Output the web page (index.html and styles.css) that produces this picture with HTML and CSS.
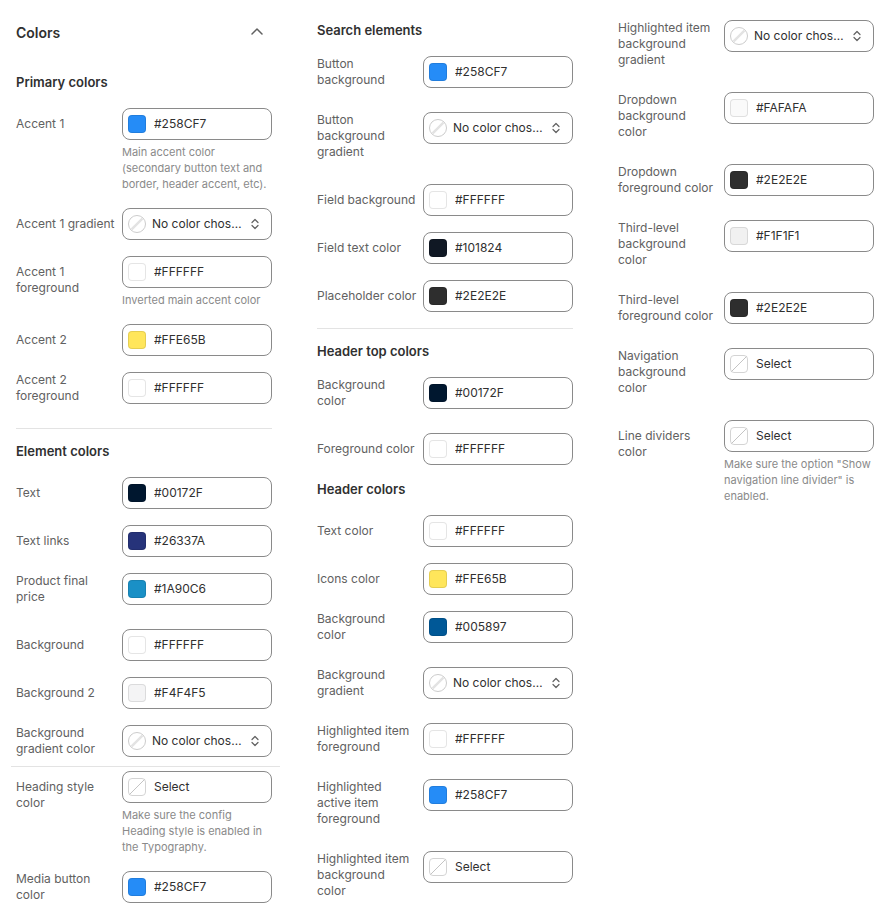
FILE: index.html
```html
<!DOCTYPE html>
<html lang="en">
<head>
  <meta charset="UTF-8">
  <title>Theme settings – Colors</title>
  <meta name="viewport" content="width=device-width, initial-scale=1.0">
  <link rel="stylesheet" href="styles.css">
</head>
<body>
  <div class="panel">

    <!-- first column: primary + element colors -->
    <div class="column col-1">
      <div class="panel-head">
        <span>Colors</span>
        <svg class="chevron" width="20" height="20" viewBox="0 0 20 20"><path d="M5 12 10 7l5 5"/></svg>
      </div>

      <div class="section">
        <h3 class="section-title">Primary colors</h3>
        <div class="settings">
          <div class="setting">
            <span class="label">Accent 1</span>
            <div class="control">
              <div class="picker"><span class="swatch" style="background:#258CF7"></span><span class="value">#258CF7</span></div>
              <p class="help">Main accent color (secondary button text and border, header accent, etc).</p>
            </div>
          </div>
          <div class="setting">
            <span class="label">Accent 1 gradient</span>
            <div class="control">
              <div class="picker empty">
                <svg class="none" width="18" height="18" viewBox="0 0 18 18"><circle cx="9" cy="9" r="8.5"/><path d="M3.6 14.4 14.4 3.6"/></svg>
                <span class="value">No color chosen</span>
                <svg class="updown" width="8" height="12" viewBox="0 0 8 12"><path d="M1 4.5 4 1.5l3 3M1 7.5l3 3 3-3"/></svg>
              </div>
            </div>
          </div>
          <div class="setting">
            <span class="label">Accent 1 foreground</span>
            <div class="control">
              <div class="picker"><span class="swatch" style="background:#FFFFFF"></span><span class="value">#FFFFFF</span></div>
              <p class="help">Inverted main accent color</p>
            </div>
          </div>
          <div class="setting">
            <span class="label">Accent 2</span>
            <div class="control">
              <div class="picker"><span class="swatch" style="background:#FFE65B"></span><span class="value">#FFE65B</span></div>
            </div>
          </div>
          <div class="setting tall">
            <span class="label">Accent 2 foreground</span>
            <div class="control">
              <div class="picker"><span class="swatch" style="background:#FFFFFF"></span><span class="value">#FFFFFF</span></div>
            </div>
          </div>
        </div>
      </div>

      <div class="divider"></div>

      <div class="section">
        <h3 class="section-title">Element colors</h3>
        <div class="settings">
          <div class="setting">
            <span class="label">Text</span>
            <div class="control">
              <div class="picker"><span class="swatch" style="background:#00172F"></span><span class="value">#00172F</span></div>
            </div>
          </div>
          <div class="setting">
            <span class="label">Text links</span>
            <div class="control">
              <div class="picker"><span class="swatch" style="background:#26337A"></span><span class="value">#26337A</span></div>
            </div>
          </div>
          <div class="setting tall">
            <span class="label">Product final price</span>
            <div class="control">
              <div class="picker"><span class="swatch" style="background:#1A90C6"></span><span class="value">#1A90C6</span></div>
            </div>
          </div>
          <div class="setting">
            <span class="label">Background</span>
            <div class="control">
              <div class="picker"><span class="swatch" style="background:#FFFFFF"></span><span class="value">#FFFFFF</span></div>
            </div>
          </div>
          <div class="setting">
            <span class="label">Background 2</span>
            <div class="control">
              <div class="picker"><span class="swatch" style="background:#F4F4F5"></span><span class="value">#F4F4F5</span></div>
            </div>
          </div>
          <div class="setting tall">
            <span class="label">Background gradient color</span>
            <div class="control">
              <div class="picker empty">
                <svg class="none" width="18" height="18" viewBox="0 0 18 18"><circle cx="9" cy="9" r="8.5"/><path d="M3.6 14.4 14.4 3.6"/></svg>
                <span class="value">No color chosen</span>
                <svg class="updown" width="8" height="12" viewBox="0 0 8 12"><path d="M1 4.5 4 1.5l3 3M1 7.5l3 3 3-3"/></svg>
              </div>
            </div>
          </div>
          <div class="row-line"></div>
          <div class="setting">
            <span class="label">Heading style color</span>
            <div class="control">
              <div class="picker">
                <svg class="unset" width="18" height="18" viewBox="0 0 18 18"><rect x=".5" y=".5" width="17" height="17" rx="3.5"/><path d="M1.5 16.5 16.5 1.5"/></svg>
                <span class="value">Select</span>
              </div>
              <p class="help">Make sure the config Heading style is enabled in the Typography.</p>
            </div>
          </div>
          <div class="setting tall">
            <span class="label">Media button color</span>
            <div class="control">
              <div class="picker"><span class="swatch" style="background:#258CF7"></span><span class="value">#258CF7</span></div>
            </div>
          </div>
        </div>
      </div>
    </div>

    <!-- second column: search + header -->
    <div class="column col-2">
      <div class="section">
        <h3 class="section-title">Search elements</h3>
        <div class="settings">
          <div class="setting tall">
            <span class="label">Button background</span>
            <div class="control">
              <div class="picker"><span class="swatch" style="background:#258CF7"></span><span class="value">#258CF7</span></div>
            </div>
          </div>
          <div class="setting tall">
            <span class="label">Button background gradient</span>
            <div class="control">
              <div class="picker empty">
                <svg class="none" width="18" height="18" viewBox="0 0 18 18"><circle cx="9" cy="9" r="8.5"/><path d="M3.6 14.4 14.4 3.6"/></svg>
                <span class="value">No color chosen</span>
                <svg class="updown" width="8" height="12" viewBox="0 0 8 12"><path d="M1 4.5 4 1.5l3 3M1 7.5l3 3 3-3"/></svg>
              </div>
            </div>
          </div>
          <div class="setting">
            <span class="label">Field background</span>
            <div class="control">
              <div class="picker"><span class="swatch" style="background:#FFFFFF"></span><span class="value">#FFFFFF</span></div>
            </div>
          </div>
          <div class="setting">
            <span class="label">Field text color</span>
            <div class="control">
              <div class="picker"><span class="swatch" style="background:#101824"></span><span class="value">#101824</span></div>
            </div>
          </div>
          <div class="setting">
            <span class="label">Placeholder color</span>
            <div class="control">
              <div class="picker"><span class="swatch" style="background:#2E2E2E"></span><span class="value">#2E2E2E</span></div>
            </div>
          </div>
        </div>
      </div>

      <div class="divider"></div>

      <div class="section">
        <h3 class="section-title">Header top colors</h3>
        <div class="settings">
          <div class="setting tall">
            <span class="label">Background color</span>
            <div class="control">
              <div class="picker"><span class="swatch" style="background:#00172F"></span><span class="value">#00172F</span></div>
            </div>
          </div>
          <div class="setting">
            <span class="label">Foreground color</span>
            <div class="control">
              <div class="picker"><span class="swatch" style="background:#FFFFFF"></span><span class="value">#FFFFFF</span></div>
            </div>
          </div>
        </div>
      </div>

      <div class="section">
        <h3 class="section-title">Header colors</h3>
        <div class="settings">
          <div class="setting">
            <span class="label">Text color</span>
            <div class="control">
              <div class="picker"><span class="swatch" style="background:#FFFFFF"></span><span class="value">#FFFFFF</span></div>
            </div>
          </div>
          <div class="setting">
            <span class="label">Icons color</span>
            <div class="control">
              <div class="picker"><span class="swatch" style="background:#FFE65B"></span><span class="value">#FFE65B</span></div>
            </div>
          </div>
          <div class="setting tall">
            <span class="label">Background color</span>
            <div class="control">
              <div class="picker"><span class="swatch" style="background:#005897"></span><span class="value">#005897</span></div>
            </div>
          </div>
          <div class="setting tall">
            <span class="label">Background gradient</span>
            <div class="control">
              <div class="picker empty">
                <svg class="none" width="18" height="18" viewBox="0 0 18 18"><circle cx="9" cy="9" r="8.5"/><path d="M3.6 14.4 14.4 3.6"/></svg>
                <span class="value">No color chosen</span>
                <svg class="updown" width="8" height="12" viewBox="0 0 8 12"><path d="M1 4.5 4 1.5l3 3M1 7.5l3 3 3-3"/></svg>
              </div>
            </div>
          </div>
          <div class="setting tall">
            <span class="label">Highlighted item foreground</span>
            <div class="control">
              <div class="picker"><span class="swatch" style="background:#FFFFFF"></span><span class="value">#FFFFFF</span></div>
            </div>
          </div>
          <div class="setting tall">
            <span class="label">Highlighted active item foreground</span>
            <div class="control">
              <div class="picker"><span class="swatch" style="background:#258CF7"></span><span class="value">#258CF7</span></div>
            </div>
          </div>
          <div class="setting tall">
            <span class="label">Highlighted item background<br>color</span>
            <div class="control">
              <div class="picker">
                <svg class="unset" width="18" height="18" viewBox="0 0 18 18"><rect x=".5" y=".5" width="17" height="17" rx="3.5"/><path d="M1.5 16.5 16.5 1.5"/></svg>
                <span class="value">Select</span>
              </div>
            </div>
          </div>
        </div>
      </div>
    </div>

    <!-- third column: rest of header colors -->
    <div class="column col-3">
      <div class="settings">
        <div class="setting tall">
          <span class="label">Highlighted item background gradient</span>
          <div class="control">
            <div class="picker empty">
              <svg class="none" width="18" height="18" viewBox="0 0 18 18"><circle cx="9" cy="9" r="8.5"/><path d="M3.6 14.4 14.4 3.6"/></svg>
              <span class="value">No color chosen</span>
              <svg class="updown" width="8" height="12" viewBox="0 0 8 12"><path d="M1 4.5 4 1.5l3 3M1 7.5l3 3 3-3"/></svg>
            </div>
          </div>
        </div>
        <div class="setting tall">
          <span class="label">Dropdown background<br>color</span>
          <div class="control">
            <div class="picker"><span class="swatch" style="background:#FAFAFA"></span><span class="value">#FAFAFA</span></div>
          </div>
        </div>
        <div class="setting tall">
          <span class="label">Dropdown foreground color</span>
          <div class="control">
            <div class="picker"><span class="swatch" style="background:#2E2E2E"></span><span class="value">#2E2E2E</span></div>
          </div>
        </div>
        <div class="setting tall">
          <span class="label">Third-level background<br>color</span>
          <div class="control">
            <div class="picker"><span class="swatch" style="background:#F1F1F1"></span><span class="value">#F1F1F1</span></div>
          </div>
        </div>
        <div class="setting tall">
          <span class="label">Third-level foreground color</span>
          <div class="control">
            <div class="picker"><span class="swatch" style="background:#2E2E2E"></span><span class="value">#2E2E2E</span></div>
          </div>
        </div>
        <div class="setting tall">
          <span class="label">Navigation background<br>color</span>
          <div class="control">
            <div class="picker">
              <svg class="unset" width="18" height="18" viewBox="0 0 18 18"><rect x=".5" y=".5" width="17" height="17" rx="3.5"/><path d="M1.5 16.5 16.5 1.5"/></svg>
              <span class="value">Select</span>
            </div>
          </div>
        </div>
        <div class="setting">
          <span class="label">Line dividers color</span>
          <div class="control">
            <div class="picker">
              <svg class="unset" width="18" height="18" viewBox="0 0 18 18"><rect x=".5" y=".5" width="17" height="17" rx="3.5"/><path d="M1.5 16.5 16.5 1.5"/></svg>
              <span class="value">Select</span>
            </div>
            <p class="help">Make sure the option "Show navigation line divider" is enabled.</p>
          </div>
        </div>
      </div>
    </div>

  </div>
</body>
</html>
```

FILE: styles.css
```css
body {
  margin: 0;
  font-family: Inter, "Noto Sans", sans-serif;
  font-size: 12px;
  color: #303030;
  background: #fff;
  overflow: hidden;
}
.panel {
  display: flex;
  gap: 13px;
}
.column {
  flex: none;
  width: 256px;
  padding: 22px 16px 0;
}
.col-3 {
  padding-top: 20px;
}
.panel-head {
  display: flex;
  align-items: center;
  justify-content: space-between;
  height: 20px;
  margin-bottom: 32px;
  font-size: 14px;
  font-weight: 600;
}
.chevron {
  margin-right: 5px;
}
.chevron path {
  fill: none;
  stroke: #616161;
  stroke-width: 1.5;
  stroke-linecap: round;
  stroke-linejoin: round;
}
.section + .section {
  margin-top: 16px;
}
.section-title {
  margin: 0 0 18px;
  font-size: 13px;
  font-weight: 600;
  line-height: 16px;
}
.divider {
  height: 1px;
  background: #e3e3e3;
  margin: 16px 0 14px;
}
.settings {
  display: flex;
  flex-direction: column;
  gap: 16px;
}
.row-line {
  height: 1px;
  background: #e3e3e3;
  margin: -15px -8px -12px -5px;
}
.setting {
  display: grid;
  grid-template-columns: 100px 150px;
  column-gap: 6px;
  align-items: start;
}
.label {
  padding-top: 8px;
  line-height: 16px;
  color: #616161;
}
.setting.tall .label {
  padding: 0 0 8px;
}
.picker {
  box-sizing: border-box;
  display: flex;
  align-items: center;
  gap: 8px;
  height: 32px;
  padding: 0 12px 0 5px;
  border: 1px solid #8a8a8a;
  border-radius: 8px;
  background: #fff;
  font-size: 12px;
}
.picker.empty {
  gap: 6px;
}
.swatch {
  flex: none;
  width: 18px;
  height: 18px;
  border-radius: 4px;
  box-shadow: inset 0 0 0 1px rgba(0,0,0,0.1);
}
.value {
  flex: 1;
  min-width: 0;
  white-space: nowrap;
  overflow: hidden;
  text-overflow: ellipsis;
  line-height: 16px;
}
.picker.empty .value {
  flex: none;
  width: 91px;
}
.none, .unset, .updown {
  flex: none;
}
.none circle {
  fill: #fff;
  stroke: #cccccc;
}
.none path {
  stroke: #e3e3e3;
  stroke-width: 2.5;
}
.unset rect {
  fill: #fff;
  stroke: #d4d4d4;
}
.unset path {
  stroke: #c4c4c4;
}
.updown {
  margin-left: auto;
}
.updown path {
  fill: none;
  stroke: #616161;
  stroke-width: 1.2;
  stroke-linecap: round;
  stroke-linejoin: round;
}
.help {
  margin: 4px 0 0;
  font-size: 11px;
  line-height: 16px;
  color: #8a8a8a;
}
```
